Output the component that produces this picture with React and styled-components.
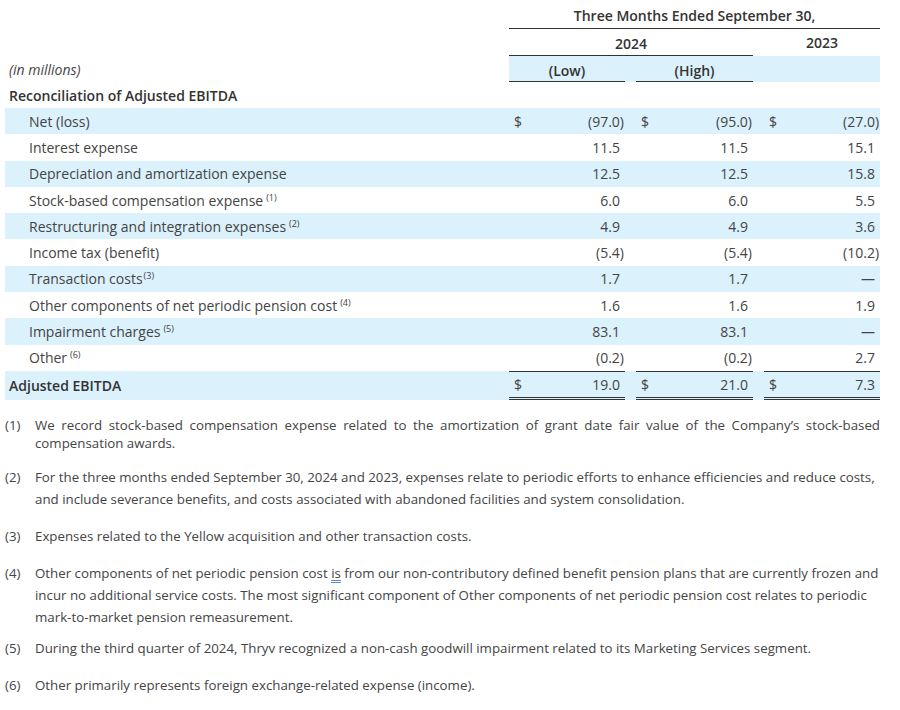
import React from "react";
import styled, { createGlobalStyle } from "styled-components";

const GlobalStyle = createGlobalStyle`
  body {
    margin: 0;
    background: #fff;
    font-family: "Open Sans", "Liberation Sans", sans-serif;
    font-size: 13px;
    color: #444;
  }
`;

const BLUE = "#dbf1fc";

const Page = styled.div`
  padding: 0 20px 0 5px;
  width: 875px;
`;

const Table = styled.table`
  width: 875px;
  table-layout: fixed;
  border-collapse: separate;
  border-spacing: 0;
  font-size: 14px;
`;

const Row = styled.tr`
  height: ${(p) => p.$h || 26.3}px;
  background: ${(p) => (p.$shaded ? BLUE : "transparent")};
`;

const Label = styled.td`
  padding: 0 0 0 ${(p) => (p.$indent ? 24 : 4)}px;
  font-weight: ${(p) => (p.$bold ? 600 : 400)};
  font-style: ${(p) => (p.$italic ? "italic" : "normal")};
  color: ${(p) => (p.$bold ? "#333" : "#444")};
  white-space: nowrap;
  vertical-align: middle;
`;

const Sup = styled.sup`
  font-size: 9px;
  vertical-align: 5px;
  line-height: 0;
  margin-left: ${(p) => (p.$tight ? 1 : 3)}px;
`;

const HeadCell = styled.td`
  text-align: center;
  font-weight: 600;
  color: #333;
  padding: ${(p) => p.$pad || "0"};
  vertical-align: middle;
  background: ${(p) => (p.$shaded ? BLUE : "transparent")};
  border-bottom: ${(p) => (p.$rule ? "1px solid #333" : "none")};
`;

const Spacer = styled.td`
  padding: 0;
  background: ${(p) => (p.$shaded ? BLUE : "transparent")};
`;

const Dollar = styled.td`
  padding: 0 0 0 5px;
  text-align: left;
  border-top: ${(p) => (p.$total ? "1px solid #333" : "none")};
  border-bottom: ${(p) => (p.$total ? "3px double #333" : "none")};
`;

const Value = styled.td`
  padding: 0 ${(p) => (p.$paren ? 1 : 5)}px 0 0;
  text-align: right;
  white-space: nowrap;
  border-top: ${(p) => (p.$total ? "1px solid #333" : "none")};
  border-bottom: ${(p) => (p.$total ? "3px double #333" : "none")};
`;

const Notes = styled.div`
  margin-top: 16px;
  width: 875px;
  font-size: 13.3px;
`;

const Note = styled.div`
  display: flex;
  margin-top: ${(p) => p.$gap || 0}px;
  line-height: ${(p) => p.$lh || 22}px;
  color: #444;
`;

const NoteNum = styled.span`
  flex: 0 0 30px;
`;

const NoteText = styled.p`
  margin: 0;
  flex: 1;
  text-align: ${(p) => (p.$justify ? "justify" : "left")};
`;

const Squiggle = styled.span`
  text-decoration: underline double #5b86d9;
  text-underline-offset: 2px;
`;

const rows = [
  { label: "Net (loss)", dollar: true, vals: ["(97.0)", "(95.0)", "(27.0)"] },
  { label: "Interest expense", vals: ["11.5", "11.5", "15.1"] },
  { label: "Depreciation and amortization expense", vals: ["12.5", "12.5", "15.8"] },
  { label: "Stock-based compensation expense", note: "(1)", vals: ["6.0", "6.0", "5.5"] },
  { label: "Restructuring and integration expenses", note: "(2)", vals: ["4.9", "4.9", "3.6"] },
  { label: "Income tax (benefit)", vals: ["(5.4)", "(5.4)", "(10.2)"] },
  { label: "Transaction costs", note: "(3)", tight: true, vals: ["1.7", "1.7", "—"] },
  { label: "Other components of net periodic pension cost", note: "(4)", vals: ["1.6", "1.6", "1.9"] },
  { label: "Impairment charges", note: "(5)", vals: ["83.1", "83.1", "—"] },
  { label: "Other", note: "(6)", vals: ["(0.2)", "(0.2)", "2.7"] },
];

function Amounts({ vals, dollar, total }) {
  const out = [];
  vals.forEach((v, i) => {
    out.push(
      <Dollar key={"d" + i} $total={total}>
        {dollar ? "$" : ""}
      </Dollar>
    );
    out.push(
      <Value key={"v" + i} $total={total} $paren={v.endsWith(")")}>
        {v}
      </Value>
    );
    if (i < vals.length - 1) out.push(<Spacer key={"s" + i} />);
  });
  return out;
}

export default function App() {
  return (
    <Page>
      <GlobalStyle />
      <Table>
        <colgroup>
          <col style={{ width: 504 }} />
          <col style={{ width: 30 }} />
          <col style={{ width: 86 }} />
          <col style={{ width: 11 }} />
          <col style={{ width: 30 }} />
          <col style={{ width: 87 }} />
          <col style={{ width: 11 }} />
          <col style={{ width: 30 }} />
          <col style={{ width: 86 }} />
        </colgroup>
        <tbody>
          <Row $h={29}>
            <Label />
            <HeadCell colSpan={8} $rule $pad="2px 0 0">
              Three Months Ended September 30,
            </HeadCell>
          </Row>
          <Row $h={27}>
            <Label />
            <HeadCell colSpan={5} $rule $pad="2px 0 0">
              2024
            </HeadCell>
            <Spacer />
            <HeadCell colSpan={2} $pad="0 0 0">
              2023
            </HeadCell>
          </Row>
          <Row $h={26}>
            <Label $italic>(in millions)</Label>
            <HeadCell colSpan={2} $shaded $rule $pad="3px 0 0">
              (Low)
            </HeadCell>
            <Spacer $shaded />
            <HeadCell colSpan={2} $shaded $rule $pad="3px 0 0">
              (High)
            </HeadCell>
            <Spacer $shaded />
            <HeadCell colSpan={2} $shaded />
          </Row>
          <Row $h={26}>
            <Label $bold colSpan={9}>
              Reconciliation of Adjusted EBITDA
            </Label>
          </Row>
          {rows.map((r, i) => (
            <Row key={r.label} $shaded={i % 2 === 0}>
              <Label $indent>
                {r.label}
                {r.note && <Sup $tight={r.tight}>{r.note}</Sup>}
              </Label>
              <Amounts vals={r.vals} dollar={r.dollar} />
            </Row>
          ))}
          <Row $shaded $h={29}>
            <Label $bold>Adjusted EBITDA</Label>
            <Amounts vals={["19.0", "21.0", "7.3"]} dollar total />
          </Row>
        </tbody>
      </Table>
      <Notes>
        <Note $lh={18}>
          <NoteNum>(1)</NoteNum>
          <NoteText $justify>
            We record stock-based compensation expense related to the amortization of grant date fair value of
            the Company’s stock-based compensation awards.
          </NoteText>
        </Note>
        <Note $gap={14}>
          <NoteNum>(2)</NoteNum>
          <NoteText>
            For the three months ended September 30, 2024 and 2023, expenses relate to periodic efforts to enhance
            efficiencies and reduce costs, and include severance benefits, and costs associated with abandoned
            facilities and system consolidation.
          </NoteText>
        </Note>
        <Note $gap={15}>
          <NoteNum>(3)</NoteNum>
          <NoteText>Expenses related to the Yellow acquisition and other transaction costs.</NoteText>
        </Note>
        <Note $gap={15}>
          <NoteNum>(4)</NoteNum>
          <NoteText>
            Other components of net periodic pension cost <Squiggle>is</Squiggle> from our non-contributory defined
            benefit pension plans that are currently frozen and incur no additional service costs. The most
            significant component of Other components of net periodic pension cost relates to periodic
            mark-to-market pension remeasurement.
          </NoteText>
        </Note>
        <Note $gap={9}>
          <NoteNum>(5)</NoteNum>
          <NoteText>
            During the third quarter of 2024, Thryv recognized a non-cash goodwill impairment related to its
            Marketing Services segment.
          </NoteText>
        </Note>
        <Note $gap={15}>
          <NoteNum>(6)</NoteNum>
          <NoteText>Other primarily represents foreign exchange-related expense (income).</NoteText>
        </Note>
      </Notes>
    </Page>
  );
}
